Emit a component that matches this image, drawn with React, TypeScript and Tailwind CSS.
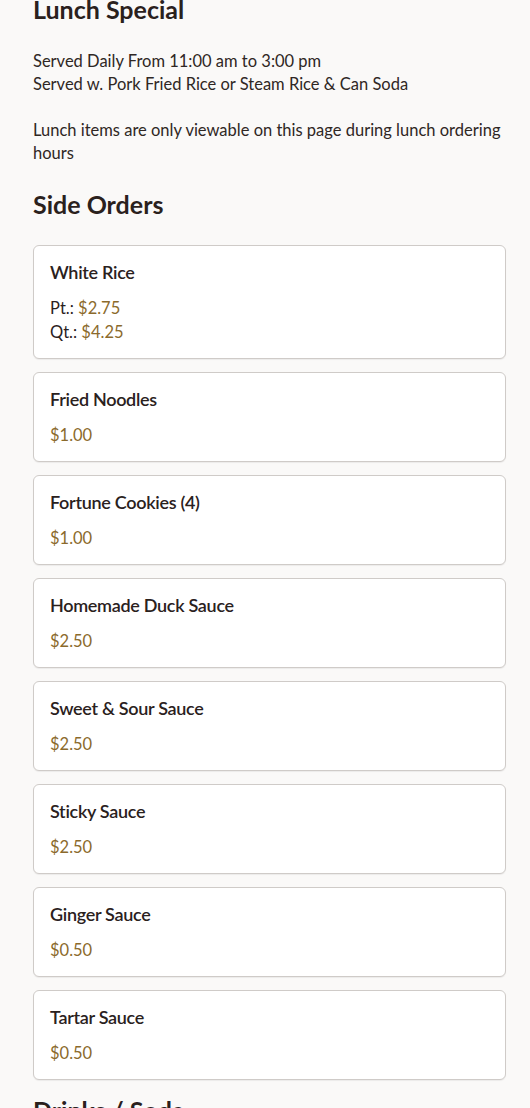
const sides: { name: string; prices: { label?: string; value: string }[] }[] = [
  { name: "White Rice", prices: [{ label: "Pt.:", value: "$2.75" }, { label: "Qt.:", value: "$4.25" }] },
  { name: "Fried Noodles", prices: [{ value: "$1.00" }] },
  { name: "Fortune Cookies (4)", prices: [{ value: "$1.00" }] },
  { name: "Homemade Duck Sauce", prices: [{ value: "$2.50" }] },
  { name: "Sweet & Sour Sauce", prices: [{ value: "$2.50" }] },
  { name: "Sticky Sauce", prices: [{ value: "$2.50" }] },
  { name: "Ginger Sauce", prices: [{ value: "$0.50" }] },
  { name: "Tartar Sauce", prices: [{ value: "$0.50" }] },
];

function ItemCard({ name, prices }: { name: string; prices: { label?: string; value: string }[] }) {
  return (
    <div className="rounded-md border border-[#cfcbc8] bg-white px-4 pt-[13px] pb-[14px] shadow-[0_1px_1px_rgba(0,0,0,0.06)]">
      <h3 className="text-[18px] leading-[26px] font-semibold tracking-[-0.3px] text-[#2a211d]">{name}</h3>
      <div className="mt-[11px] flex flex-col">
        {prices.map((p) => (
          <div key={p.value + (p.label ?? "")} className="text-[16.5px] leading-[24px] text-[#2a211d]">
            {p.label && <span>{p.label} </span>}
            <span className="text-[#8b6a2c]">{p.value}</span>
          </div>
        ))}
      </div>
    </div>
  );
}

export default function App() {
  return (
    <div className="min-h-screen bg-[#faf9f8] font-['Lato',sans-serif] text-[#2a211d]">
      <div className="mt-[-7px] px-[33px] pr-[24px]">
        <h1 className="text-[25px] leading-[32px] font-bold">Lunch Special</h1>
        <div className="mt-[25px] text-[16.5px] leading-[23px] text-[#2f2724]">
          <p>Served Daily From 11:00 am to 3:00 pm</p>
          <p>Served w. Pork Fried Rice or Steam Rice &amp; Can Soda</p>
        </div>
        <p className="mt-[23px] text-[16.5px] leading-[23px] text-[#2f2724]">
          Lunch items are only viewable on this page during lunch ordering hours
        </p>
        <h2 className="mt-[23px] text-[25px] leading-[32px] font-bold">Side Orders</h2>
        <div className="mt-[25px] flex flex-col gap-[13px]">
          {sides.map((s) => (
            <ItemCard key={s.name} name={s.name} prices={s.prices} />
          ))}
        </div>
        <h2 className="mt-[14px] text-[25px] leading-[32px] font-bold">Drinks / Soda</h2>
      </div>
    </div>
  );
}
